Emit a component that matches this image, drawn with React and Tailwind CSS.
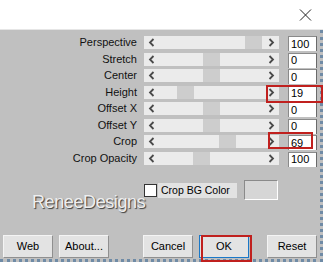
import React from 'react';

const rows = [
  { label: 'Perspective', thumb: 101, value: '100' },
  { label: 'Stretch', thumb: 59, value: '0' },
  { label: 'Center', thumb: 59, value: '0' },
  { label: 'Height', thumb: 33, value: '19' },
  { label: 'Offset X', thumb: 59, value: '0' },
  { label: 'Offset Y', thumb: 59, value: '0' },
  { label: 'Crop', thumb: 75, value: '69' },
  { label: 'Crop Opacity', thumb: 49, value: '100' },
];

const Chevron = ({ dir }) => (
  <svg width="7" height="9" viewBox="0 0 7 9" className="shrink-0">
    {dir === 'left' ? (
      <path d="M5.5 1 L2 4.5 L5.5 8" fill="none" stroke="#4a4a4a" strokeWidth="1.8" />
    ) : (
      <path d="M1.5 1 L5 4.5 L1.5 8" fill="none" stroke="#4a4a4a" strokeWidth="1.8" />
    )}
  </svg>
);

const SliderRow = ({ label, thumb, value }) => (
  <div className="flex items-start h-[16.5px]">
    <div className="w-[137px] h-[13px] flex items-center justify-end text-[11px] leading-none text-[#111]">
      {label}
    </div>
    <div className="ml-[7px] w-[135px] h-[13px] bg-[#ebebeb] relative flex items-center justify-between px-[4px]">
      <Chevron dir="left" />
      {/* thumb */}
      <div className="absolute top-0 bottom-0 w-[17px] bg-[#cdcdcd]" style={{ left: thumb }}></div>
      <Chevron dir="right" />
    </div>
    <div className="ml-[9px] w-[29px] h-[15px] bg-white border-l border-t border-[#8a8a8a] border-r border-r-[#6a6a6a] flex items-center pl-[2px] text-[11px] leading-none text-black">
      {value}
    </div>
  </div>
);

const Button = ({ children, className = '' }) => (
  <div
    className={`h-[23px] w-[50px] flex items-center justify-center text-[11px] text-black bg-[#e3e3e3] border border-t-[#f4f4f4] border-l-[#f4f4f4] border-r-[#8f8f8f] border-b-[#8f8f8f] ${className}`}
  >
    {children}
  </div>
);

export default function App() {
  return (
    <div className="w-[323px] h-[262px] relative flex flex-col bg-white overflow-hidden font-['Liberation_Sans',Arial,sans-serif]">
      {/* title strip */}
      <div className="h-[30px] flex items-start justify-end pr-[11px] pt-[9px] border-b border-[#e6e6e6]">
        <svg width="13" height="12" viewBox="0 0 13 12">
          <path d="M1 0.5 L12 11.5 M12 0.5 L1 11.5" stroke="#222" strokeWidth="1" />
        </svg>
      </div>

      <div className="flex-1 bg-[#c0c0c0] border-r-[3px] border-b-[3px] border-dotted border-[#6f8ba6] flex flex-col">
        <div className="pt-[6px] flex flex-col">
          {rows.map((r) => (
            <SliderRow key={r.label} {...r} />
          ))}
        </div>

        <div className="mt-[12px] flex">
          <div className="w-[144px] pl-[32px] pt-[12px]">
            <div className="text-[18px] leading-[20px] tracking-[-0.4px] text-[#eeeeee] [text-shadow:1px_1px_1px_#3a3a3a]">
              ReneeDesigns
            </div>
          </div>
          <div className="flex items-start">
            <div className="mt-[3px] flex items-center h-[14px]">
              <div className="w-[13px] h-[13px] bg-white border border-[#333]"></div>
              <div className="ml-[1px] w-[79px] h-[15px] bg-[#e2e2e2] flex items-center pl-[3px] text-[10.5px] text-black leading-none">
                Crop BG Color
              </div>
            </div>
            <div className="ml-[7px] w-[34px] h-[20px] bg-[#d6d6d6] border border-t-[#8a8a8a] border-l-[#8a8a8a] border-r-white border-b-white"></div>
          </div>
        </div>

        <div className="mt-auto mb-[1px] flex pl-[3px]">
          <Button>Web</Button>
          <Button className="ml-[6px]">About...</Button>
          <Button className="ml-[34px]">Cancel</Button>
          <Button className="ml-[6px] !border-[#1a78c8]">OK</Button>
          <Button className="ml-[18px]">Reset</Button>
        </div>
      </div>

      {/* red annotation boxes */}
      <div className="absolute left-[266px] top-[85px] w-[57px] h-[18px] border-2 border-[#c0201e]"></div>
      <div className="absolute left-[268px] top-[132px] w-[45px] h-[17px] border-2 border-[#c0201e]"></div>
      <div className="absolute left-[201px] top-[235px] w-[51px] h-[27px] border-2 border-[#c0201e]"></div>
    </div>
  );
}
